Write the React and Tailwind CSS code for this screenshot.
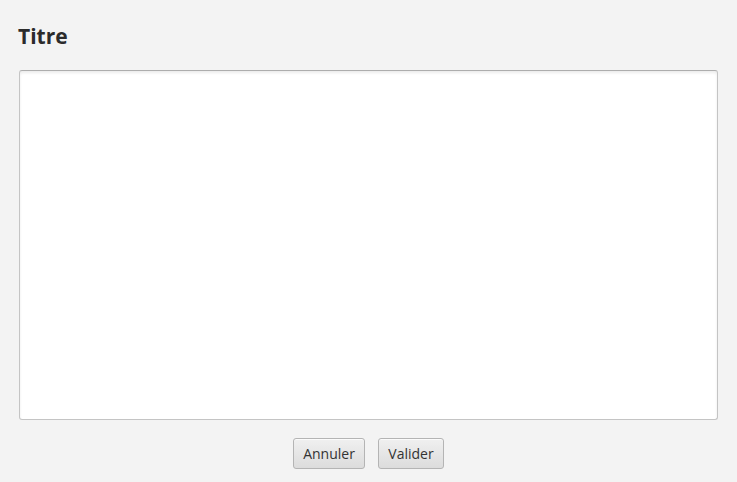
export default function App() {
  const font = { fontFamily: '"Open Sans", "Noto Sans", sans-serif' };
  return (
    <div className="w-[737px] h-[482px] bg-[#f3f3f3] flex flex-col px-[19px] pt-[22px] pb-[13px]" style={font}>
      <div className="h-[34px] text-[21px] font-bold text-[#2b2b2b] leading-[28px] ml-[-1px]">Titre</div>
      <div className="mt-[14px] h-[350px] bg-white border border-[#c4c4c4] border-t-[#adadad] rounded-[3px] shadow-[inset_0_2px_3px_rgba(0,0,0,0.08)]"></div>
      <div className="mt-[18px] flex justify-center gap-[13px]">
        <button className="h-[31px] w-[72px] rounded-[3px] border border-[#b4b4b4] bg-gradient-to-b from-[#f0f0f0] to-[#dcdcdc] text-[14px] text-[#333333] shadow-[inset_0_1px_0_rgba(255,255,255,0.7)]">Annuler</button>
        <button className="h-[31px] w-[66px] rounded-[3px] border border-[#b4b4b4] bg-gradient-to-b from-[#f0f0f0] to-[#dcdcdc] text-[14px] text-[#333333] shadow-[inset_0_1px_0_rgba(255,255,255,0.7)]">Valider</button>
      </div>
    </div>
  );
}
